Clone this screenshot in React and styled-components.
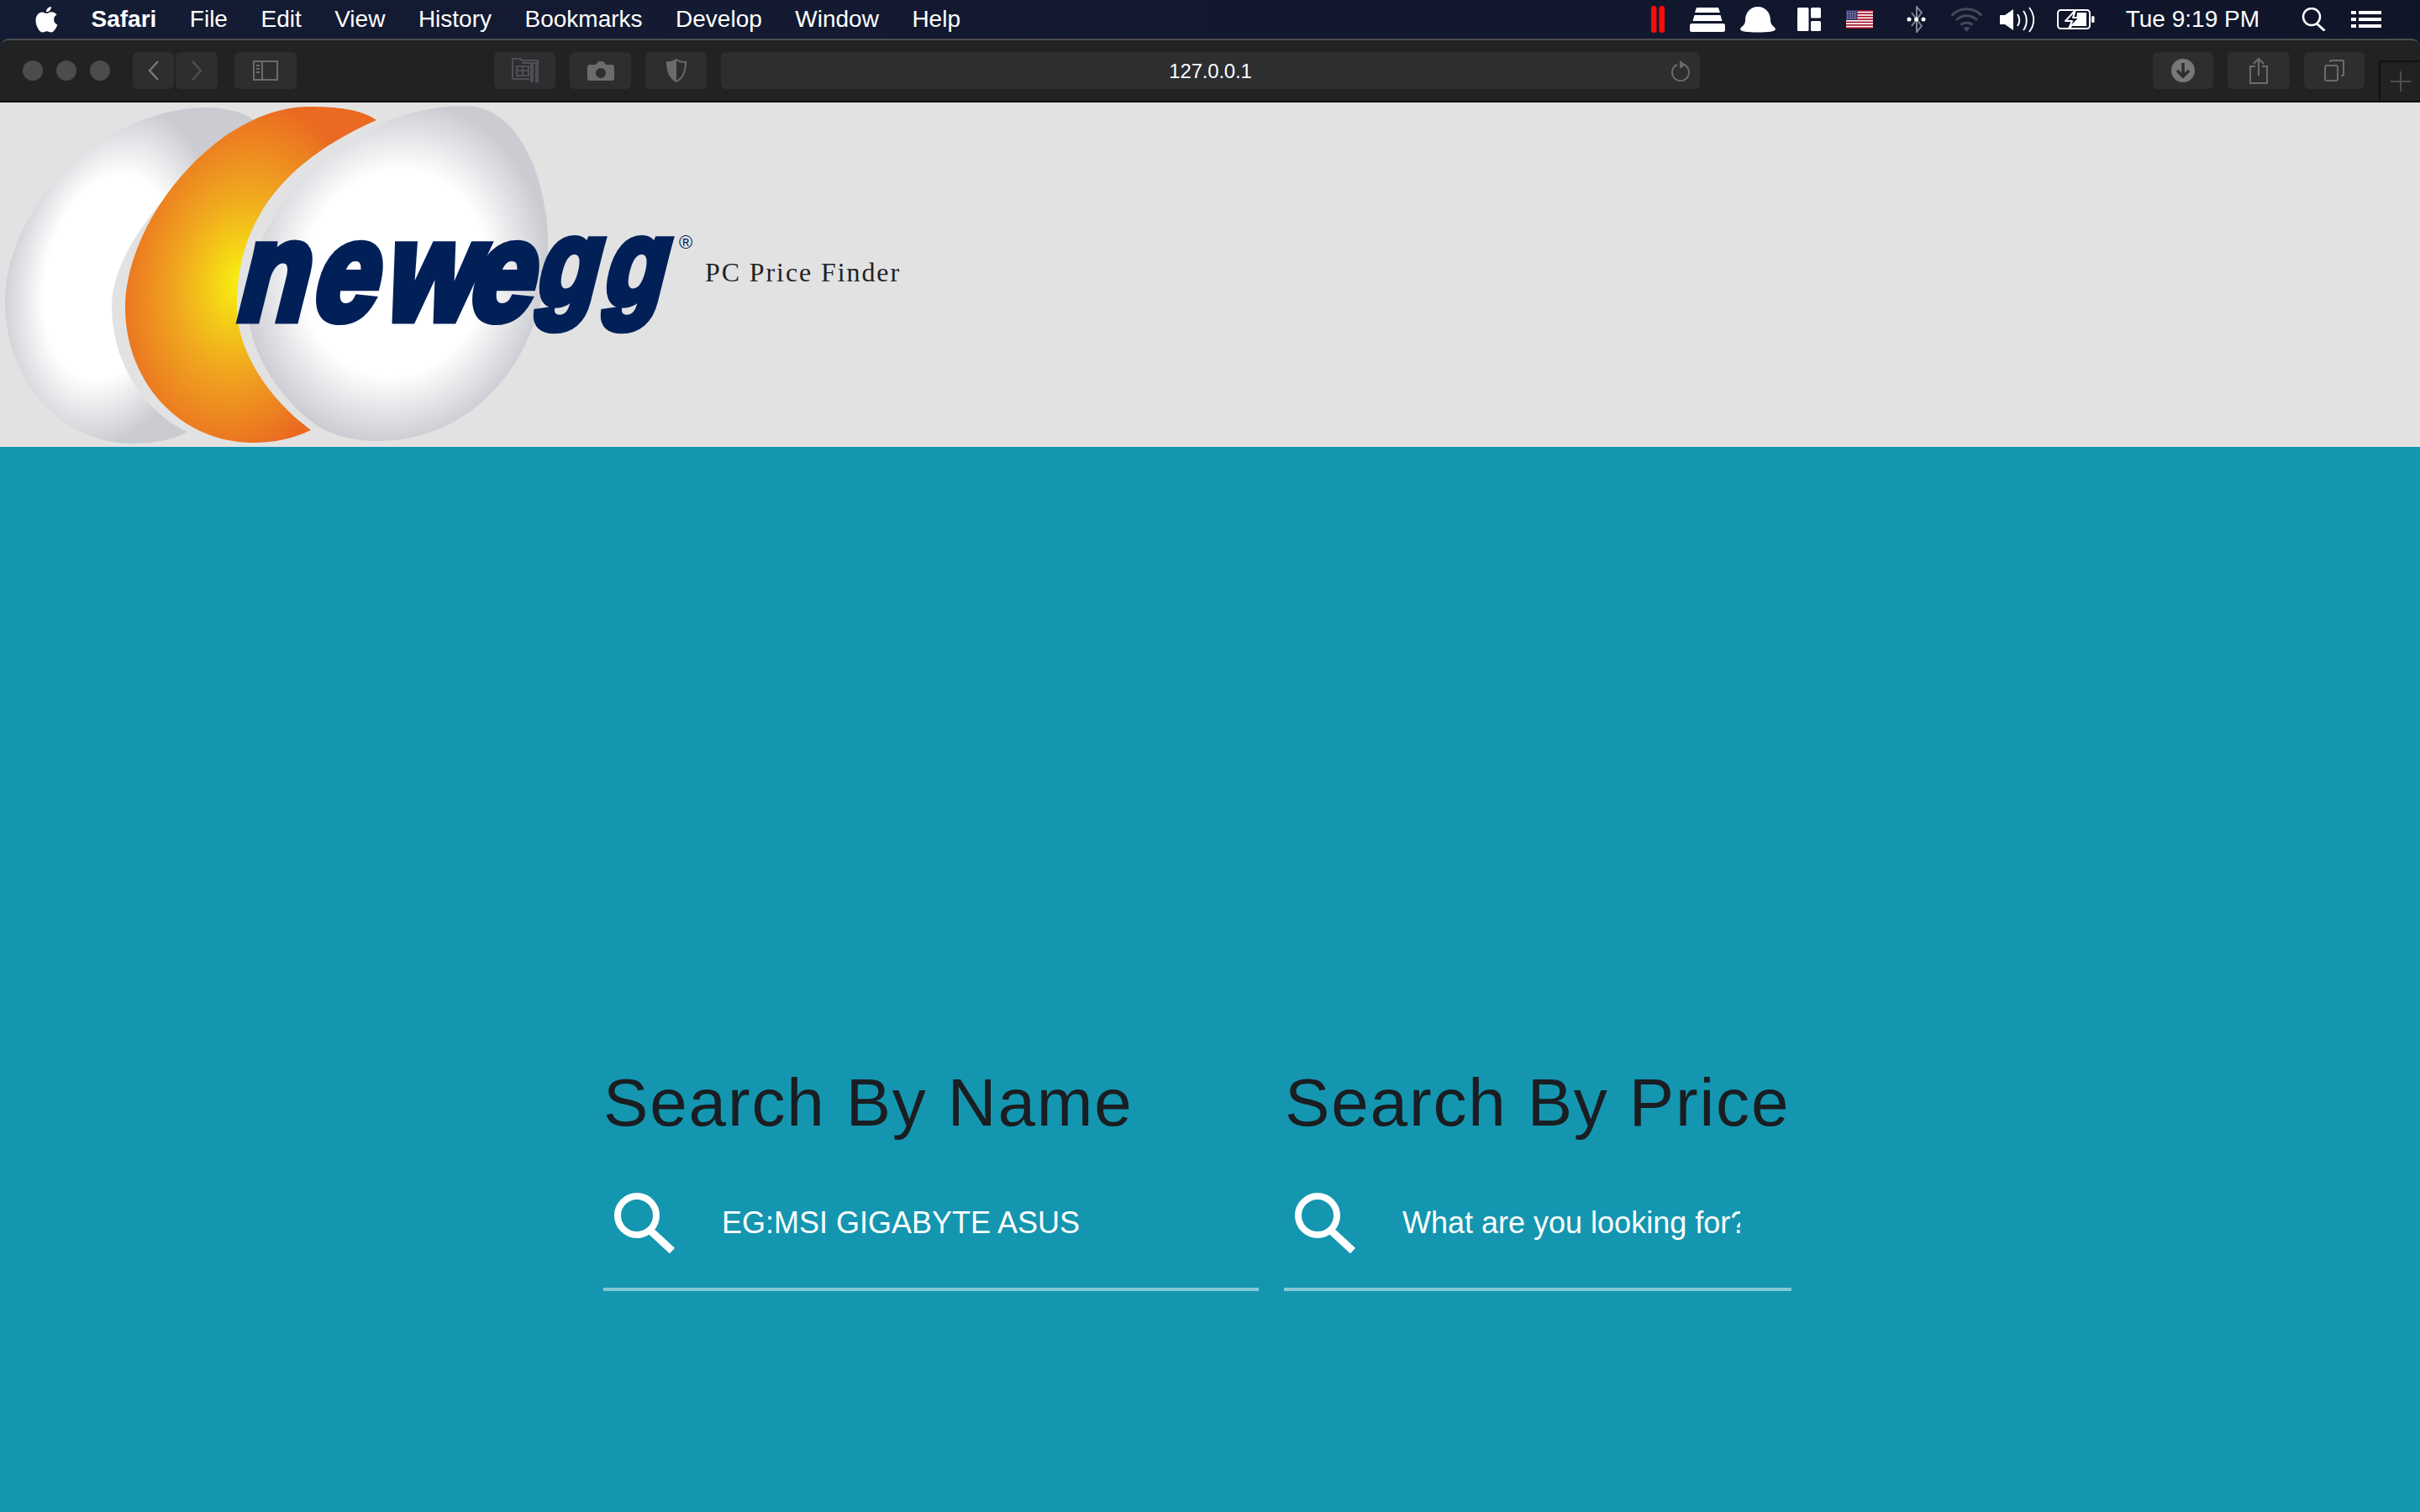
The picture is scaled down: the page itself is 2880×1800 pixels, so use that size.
import React from 'react'
import styled, { createGlobalStyle } from 'styled-components'

const GlobalStyle = createGlobalStyle`
  html, body {
    margin: 0;
    padding: 0;
    background: #1496b0;
    font-family: "Liberation Sans", Arial, sans-serif;
  }
`

const Page = styled.div`
  width: 2880px;
  height: 1800px;
  overflow: hidden;
  display: flex;
  flex-direction: column;
  background: #121930;
`

const MenuBar = styled.div`
  height: 46px;
  flex: none;
  display: flex;
  align-items: center;
  justify-content: space-between;
  padding: 0 46px 0 42px;
  color: #fff;
  font-size: 28px;
  background: linear-gradient(90deg, #141c34, #10152a);
`

const MenuLeft = styled.div`
  display: flex;
  align-items: center;
  gap: 39.5px;
`

const MenuRight = styled.div`
  display: flex;
  align-items: center;
`

const AppName = styled.span`
  font-weight: 700;
`

const Clock = styled.span`
  margin-left: ${p => p.$gap}px;
  white-space: nowrap;
`

const StatusIcon = styled.svg`
  flex: none;
  display: block;
  margin-left: ${p => p.$gap || 0}px;
`

const Toolbar = styled.div`
  height: 76px;
  flex: none;
  box-sizing: border-box;
  display: flex;
  align-items: flex-start;
  padding: 14px 0 0 27px;
  background: #212224;
  border-top: 2px solid #4c4c4e;
  border-bottom: 2px solid #0a0a0b;
  border-radius: 10px 10px 0 0;
`

const Lights = styled.div`
  display: flex;
  gap: 16px;
  margin: 10px 27px 0 0;
`

const Light = styled.span`
  width: 24px;
  height: 24px;
  border-radius: 50%;
  background: #4b4c4d;
`

const ToolButton = styled.div`
  flex: none;
  width: ${p => p.$w}px;
  height: 44px;
  margin-left: ${p => p.$gap || 0}px;
  display: flex;
  align-items: center;
  justify-content: center;
  border-radius: 6px;
  background: #2d2e30;
`

const UrlBar = styled.div`
  flex: none;
  width: 1165px;
  height: 44px;
  margin-left: 17px;
  padding-top: 2px;
  box-sizing: border-box;
  position: relative;
  display: flex;
  align-items: center;
  justify-content: center;
  border-radius: 6px;
  background: #2d2e30;
  color: #fff;
  font-size: 24px;
  letter-spacing: -0.2px;
`

const ReloadSlot = styled.span`
  position: absolute;
  right: 11px;
  top: 10px;
  display: flex;
`

const NewTab = styled.div`
  flex: none;
  width: 50px;
  height: 48px;
  margin: 10px 0 0 17px;
  box-sizing: border-box;
  display: flex;
  align-items: center;
  justify-content: center;
  border: 2px solid #111112;
  border-right: 0;
  border-bottom: 0;
`

const Header = styled.header`
  height: 410px;
  flex: none;
  display: flex;
  align-items: center;
  background: #e2e2e3;
`

const LogoSvg = styled.svg`
  flex: none;
  display: block;
`

const WordMark = styled.text`
  font-family: "Liberation Sans", Arial, sans-serif;
  font-weight: 700;
  font-size: 165px;
  fill: #012058;
  stroke: #012058;
  stroke-width: 11px;
  stroke-linejoin: miter;
  stroke-miterlimit: 3;
`

const Registered = styled.text`
  font-family: "Liberation Sans", Arial, sans-serif;
  font-size: 22px;
  fill: #012058;
`

const Tagline = styled.h1`
  margin: -6px 0 0 9px;
  font-family: "Liberation Serif", "Times New Roman", serif;
  font-weight: 400;
  font-size: 32px;
  letter-spacing: 1.9px;
  color: #222;
`

const Main = styled.main`
  flex: 1;
  display: grid;
  grid-template-columns: 780px 604px;
  column-gap: 30px;
  align-content: start;
  padding: 733px 0 0 718px;
  background: #1496b0;
`

const Column = styled.section`
  display: flex;
  flex-direction: column;
`

const Title = styled.h2`
  margin: 0;
  padding-left: ${p => p.$inset || 0}px;
  font-weight: 400;
  font-size: 80px;
  line-height: 96px;
  letter-spacing: 1.85px;
  color: #1a1d21;
  white-space: nowrap;
`

const SearchRow = styled.div`
  height: 154px;
  margin-top: 18px;
  display: flex;
  align-items: center;
  padding: 0 61px 0 13px;
  border-bottom: 4px solid #85c8d6;
`

const SearchGlyph = styled.svg`
  flex: none;
  display: block;
`

const SearchInput = styled.input`
  flex: 1;
  min-width: 0;
  margin-left: 54px;
  padding: 0;
  border: 0;
  outline: 0;
  background: transparent;
  color: #fff;
  font-family: "Liberation Sans", Arial, sans-serif;
  font-size: 36px;

  &::placeholder {
    color: #fff;
    opacity: 1;
  }
`

const menus = ['File', 'Edit', 'View', 'History', 'Bookmarks', 'Develop', 'Window', 'Help']
const dim = '#6a6b6d'
const flagStripes = [0, 3.4, 6.8, 10.2, 13.6, 17, 20.4]

const Magnifier = () => (
  <SearchGlyph width="74" height="72" viewBox="0 0 74 72">
    <ellipse cx="27" cy="27" rx="23" ry="23" fill="none" stroke="#fff" strokeWidth="8" />
    <path d="M44 46 L69 69" stroke="#fff" strokeWidth="9" fill="none" />
  </SearchGlyph>
)

const Logo = () => (
  <LogoSvg width="830" height="410" viewBox="0 122 830 410">
    <defs>
      <radialGradient id="eggLeft" gradientUnits="userSpaceOnUse" cx="0" cy="0" r="1"
        gradientTransform="translate(130 330) rotate(12) scale(125 205)">
        <stop offset="0.6" stopColor="#ffffff" />
        <stop offset="1" stopColor="#cbccd2" />
      </radialGradient>
      <radialGradient id="eggRight" gradientUnits="userSpaceOnUse" cx="0" cy="0" r="1"
        gradientTransform="translate(470 325) rotate(14) scale(180 205)">
        <stop offset="0.6" stopColor="#ffffff" />
        <stop offset="1" stopColor="#cbccd2" />
      </radialGradient>
      <radialGradient id="crescent" gradientUnits="userSpaceOnUse" cx="0" cy="0" r="1"
        gradientTransform="translate(285 335) rotate(10) scale(150 215)">
        <stop offset="0" stopColor="#f8f010" />
        <stop offset="0.5" stopColor="#f0a61f" />
        <stop offset="1" stopColor="#ea6a21" />
      </radialGradient>
    </defs>
    <path fill="url(#eggLeft)" d="M245 128 C265 128 288 132 302 143 C200 215 133 300 133 365 C133 430 170 490 223 514 C205 525 180 528 158 528 C70 528 6 450 6 360 C6 240 130 128 245 128 Z" />
    <path fill="url(#eggRight)" d="M554 126 C620 126 655 220 652 300 C648 420 570 525 449 525 C350 525 296 440 295 365 C294 250 410 126 554 126 Z" />
    <path fill="#e2e2e3" d="M462 146 C345 200 293 270 295 370 C297 420 335 480 385 512 L370 530 L280 400 L300 200 Z" />
    <path fill="url(#crescent)" d="M448 143 C330 195 280 270 282 370 C284 420 320 475 370 512 C350 522 325 527 302 527 C210 527 149 450 149 367 C149 260 260 127 368 127 C400 127 430 130 448 143 Z" />
    <WordMark x="0 110 215 337" y="0" transform="translate(277 379.500) skewX(-14) scale(0.82 1)">newe</WordMark>
    <WordMark x="0 111" y="0" transform="translate(634 362) skewX(-14) scale(0.72 0.87)">gg</WordMark>
    <Registered x="808" y="296">®</Registered>
  </LogoSvg>
)

function App () {
  return (
    <Page>
      <GlobalStyle />
      <MenuBar>
        <MenuLeft>
          <StatusIcon width="27" height="32" viewBox="0 0 27 32" fill="#fff">
            <path d="M19 1c.3 3-2.700 6.500-6 6.200C12.600 4 15.800 1.200 19 1z" />
            <path d="M13 9c1.500 0 3.500-1.800 6.300-1.800 2.400 0 4.800 1.200 6.200 3.400-5 3-4.200 10 .9 12-1.700 4.300-4.400 9-7.400 9-1.900 0-2.900-1.300-5.200-1.300s-3.400 1.300-5.200 1.300C4.700 31.600.5 23.500.5 17.500.5 11.500 4.300 7.600 8 7.600c2.200 0 3.800 1.400 5 1.400z" />
          </StatusIcon>
          <AppName>Safari</AppName>
          {menus.map(m => <span key={m}>{m}</span>)}
        </MenuLeft>
        <MenuRight>
          <StatusIcon width="16" height="32" viewBox="0 0 16 32" fill="#f80d0d">
            <rect x="0" width="6.500" height="32" rx="3" />
            <rect x="9.500" width="6.500" height="32" rx="3" />
          </StatusIcon>
          <StatusIcon $gap={30} width="42" height="29" viewBox="0 0 42 29" fill="#fff">
            <path d="M8 0h26l2 6H6z" />
            <path d="M5.500 9h31l2 7H3.500z" />
            <rect x="0" y="19" width="42" height="10" rx="2.500" />
          </StatusIcon>
          <StatusIcon $gap={18} width="42" height="31" viewBox="0 0 42 31" fill="#fff">
            <path d="M21 0c9 0 15 7 15 16 0 3 1 5 3 7 2 1.500 3 3 3 4 0 2.500-9 3.500-21 3.500S0 29.500 0 27c0-1 1-2.500 3-4 2-2 3-4 3-7C6 7 12 0 21 0z" />
          </StatusIcon>
          <StatusIcon $gap={26} width="28" height="28" viewBox="0 0 28 28" fill="#fff">
            <rect x="0" y="0" width="13.500" height="28" rx="1.500" />
            <rect x="16" y="0" width="12" height="12.500" rx="1.500" />
            <rect x="16" y="16" width="12" height="12" rx="1.500" />
          </StatusIcon>
          <StatusIcon $gap={30} width="32" height="22" viewBox="0 0 32 22">
            <rect width="32" height="22" fill="#fff" />
            {flagStripes.map(y => <rect key={y} y={y} width="32" height="1.700" fill="#a3102a" />)}
            <rect width="13.500" height="12" fill="#33336b" />
            <path d="M1 2h11.500M1 4.500h11.500M1 7h11.500M1 9.500h11.500" stroke="#dcdcea" strokeWidth="1" strokeDasharray="1 1" />
          </StatusIcon>
          <StatusIcon $gap={40} width="24" height="32" viewBox="0 0 24 32" fill="none" stroke="#7f8494" strokeWidth="2">
            <path d="M6 8l12 16-6 7V1l6 7L6 24" />
            <circle cx="3" cy="16" r="2.500" fill="#fff" stroke="none" />
            <circle cx="11.500" cy="16" r="2.500" fill="#fff" stroke="none" />
            <circle cx="20" cy="16" r="2.500" fill="#fff" stroke="none" />
          </StatusIcon>
          <StatusIcon $gap={28} width="39" height="29" viewBox="0 0 39 29" fill="none" stroke="#444a5c" strokeWidth="3">
            <path d="M1.500 9.500c10-10.500 26-10.500 36 0" />
            <path d="M7 15c7-7 18-7 25 0" />
            <path d="M12.500 20.500c4-3.500 10-3.500 14 0" />
            <path d="M19.500 29l-4-5c2.500-1.500 5.500-1.500 8 0z" fill="#444a5c" stroke="none" />
          </StatusIcon>
          <StatusIcon $gap={20} width="41" height="31" viewBox="0 0 41 31">
            <path d="M0 10h6l10-7v25l-10-7H0z" fill="#fff" />
            <g fill="none" stroke="#fff" strokeWidth="2">
              <path d="M21 9c3 4 3 10 0 14" />
              <path d="M28 5c5 6.500 5 16.500 0 23" />
              <path d="M35 1c7 9 7 20 0 29" />
            </g>
          </StatusIcon>
          <StatusIcon $gap={27} width="45" height="24" viewBox="0 0 45 24">
            <rect x="1" y="1" width="38" height="22" rx="3.500" fill="none" stroke="#fff" strokeWidth="2" />
            <rect x="41" y="8" width="3.500" height="8" rx="1.500" fill="#fff" />
            <path d="M24 4h11v16H19l4-6z" fill="#fff" />
            <path d="M22 1L10 14h8l-4 9 13-13h-8z" fill="#10152a" stroke="#fff" strokeWidth="2" strokeLinejoin="round" />
          </StatusIcon>
          <Clock $gap={37}>Tue 9:19 PM</Clock>
          <StatusIcon $gap={50} width="29" height="28" viewBox="0 0 29 28" fill="none" stroke="#fff" strokeWidth="2.500">
            <circle cx="12" cy="11" r="10" />
            <path d="M18 19l9.500 8.500" strokeWidth="3" />
          </StatusIcon>
          <StatusIcon $gap={30} width="36" height="20" viewBox="0 0 36 20" fill="#fff">
            <rect y="0" width="6" height="4" />
            <rect x="9" y="0" width="27" height="4" />
            <rect y="8" width="6" height="4" />
            <rect x="9" y="8" width="27" height="4" />
            <rect y="16" width="6" height="4" />
            <rect x="9" y="16" width="27" height="4" />
          </StatusIcon>
        </MenuRight>
      </MenuBar>

      <Toolbar>
        <Lights>
          <Light /><Light /><Light />
        </Lights>
        <ToolButton $w={49}>
          <svg width="13" height="24" viewBox="0 0 13 24" fill="none" stroke="#77787a" strokeWidth="2.500"><path d="M12 1L2 12l10 11" /></svg>
        </ToolButton>
        <ToolButton $w={50} $gap={2}>
          <svg width="13" height="24" viewBox="0 0 13 24" fill="none" stroke="#4d4e50" strokeWidth="2.500"><path d="M1 1l10 11L1 23" /></svg>
        </ToolButton>
        <ToolButton $w={74} $gap={20}>
          <svg width="30" height="24" viewBox="0 0 30 24" fill="none" stroke={dim} strokeWidth="2"><rect x="1" y="1" width="28" height="22" /><path d="M11 1v22" /><path d="M4 6h4M4 10h4M4 14h4" /></svg>
        </ToolButton>
        <ToolButton $w={73} $gap={235}>
          <svg width="32" height="30" viewBox="0 0 32 30" fill="none" stroke="#4e4f52" strokeWidth="2"><path d="M1 25V1h10l1 2h19v3H12" /><path d="M1 25h20" /><path d="M6 10h14v11H6zM13 10v11M6 15h14" /><rect x="22" y="7" width="4" height="22" fill="#4e4f52" stroke="none" /><rect x="28" y="7" width="4" height="22" fill="#4e4f52" stroke="none" /></svg>
        </ToolButton>
        <ToolButton $w={73} $gap={17}>
          <svg width="32" height="24" viewBox="0 0 32 24" fill={dim}><path d="M3 5h7l3-4h6l3 4h7a3 3 0 0 1 3 3v13a3 3 0 0 1-3 3H3a3 3 0 0 1-3-3V8a3 3 0 0 1 3-3zm13 4a6 6 0 1 0 0 12 6 6 0 0 0 0-12z" fillRule="evenodd" /></svg>
        </ToolButton>
        <ToolButton $w={73} $gap={17}>
          <svg width="24" height="28" viewBox="0 0 24 28"><path d="M12 1c3 2 7 3 11 3 0 10-2 18-11 23C3 22 1 14 1 4c4 0 8-1 11-3z" fill="none" stroke={dim} strokeWidth="2" /><path d="M12 1c-3 2-7 3-11 3 0 10 2 18 11 23z" fill={dim} /></svg>
        </ToolButton>
        <UrlBar>
          127.0.0.1
          <ReloadSlot>
            <svg width="24" height="25" viewBox="0 0 24 25" fill="none" stroke={dim} strokeWidth="2"><path d="M8 5a10 10 0 1 0 8 0" /><path d="M11 0l7 5-7 5z" fill={dim} stroke="none" /></svg>
          </ReloadSlot>
        </UrlBar>
        <ToolButton $w={72} $gap={539}>
          <svg width="28" height="28" viewBox="0 0 28 28"><circle cx="14" cy="14" r="14" fill="#77787a" /><path d="M14 5v16M7 14l7 7 7-7" fill="none" stroke="#2d2e30" strokeWidth="3.500" /></svg>
        </ToolButton>
        <ToolButton $w={74} $gap={17}>
          <svg width="22" height="32" viewBox="0 0 22 32" fill="none" stroke={dim} strokeWidth="2"><path d="M7 11H1v20h20V11h-6" /><path d="M11 22V2M5 8l6-6 6 6" /></svg>
        </ToolButton>
        <ToolButton $w={72} $gap={17}>
          <svg width="24" height="26" viewBox="0 0 24 26" fill="none" stroke={dim} strokeWidth="2"><rect x="1" y="7" width="15" height="18" rx="2" /><path d="M7 3V2a1 1 0 0 1 1-1h14a1 1 0 0 1 1 1v16a1 1 0 0 1-1 1h-2" /></svg>
        </ToolButton>
        <NewTab>
          <svg width="24" height="24" viewBox="0 0 24 24" stroke="#4d4e50" strokeWidth="2"><path d="M12 0v24M0 12h24" /></svg>
        </NewTab>
      </Toolbar>

      <Header>
        <Logo />
        <Tagline>PC Price Finder</Tagline>
      </Header>

      <Main>
        <Column>
          <Title>Search By Name</Title>
          <SearchRow>
            <Magnifier />
            <SearchInput placeholder="EG:MSI GIGABYTE ASUS" />
          </SearchRow>
        </Column>
        <Column>
          <Title $inset={1}>Search By Price</Title>
          <SearchRow>
            <Magnifier />
            <SearchInput placeholder="What are you looking for?" />
          </SearchRow>
        </Column>
      </Main>
    </Page>
  )
}

export default App
